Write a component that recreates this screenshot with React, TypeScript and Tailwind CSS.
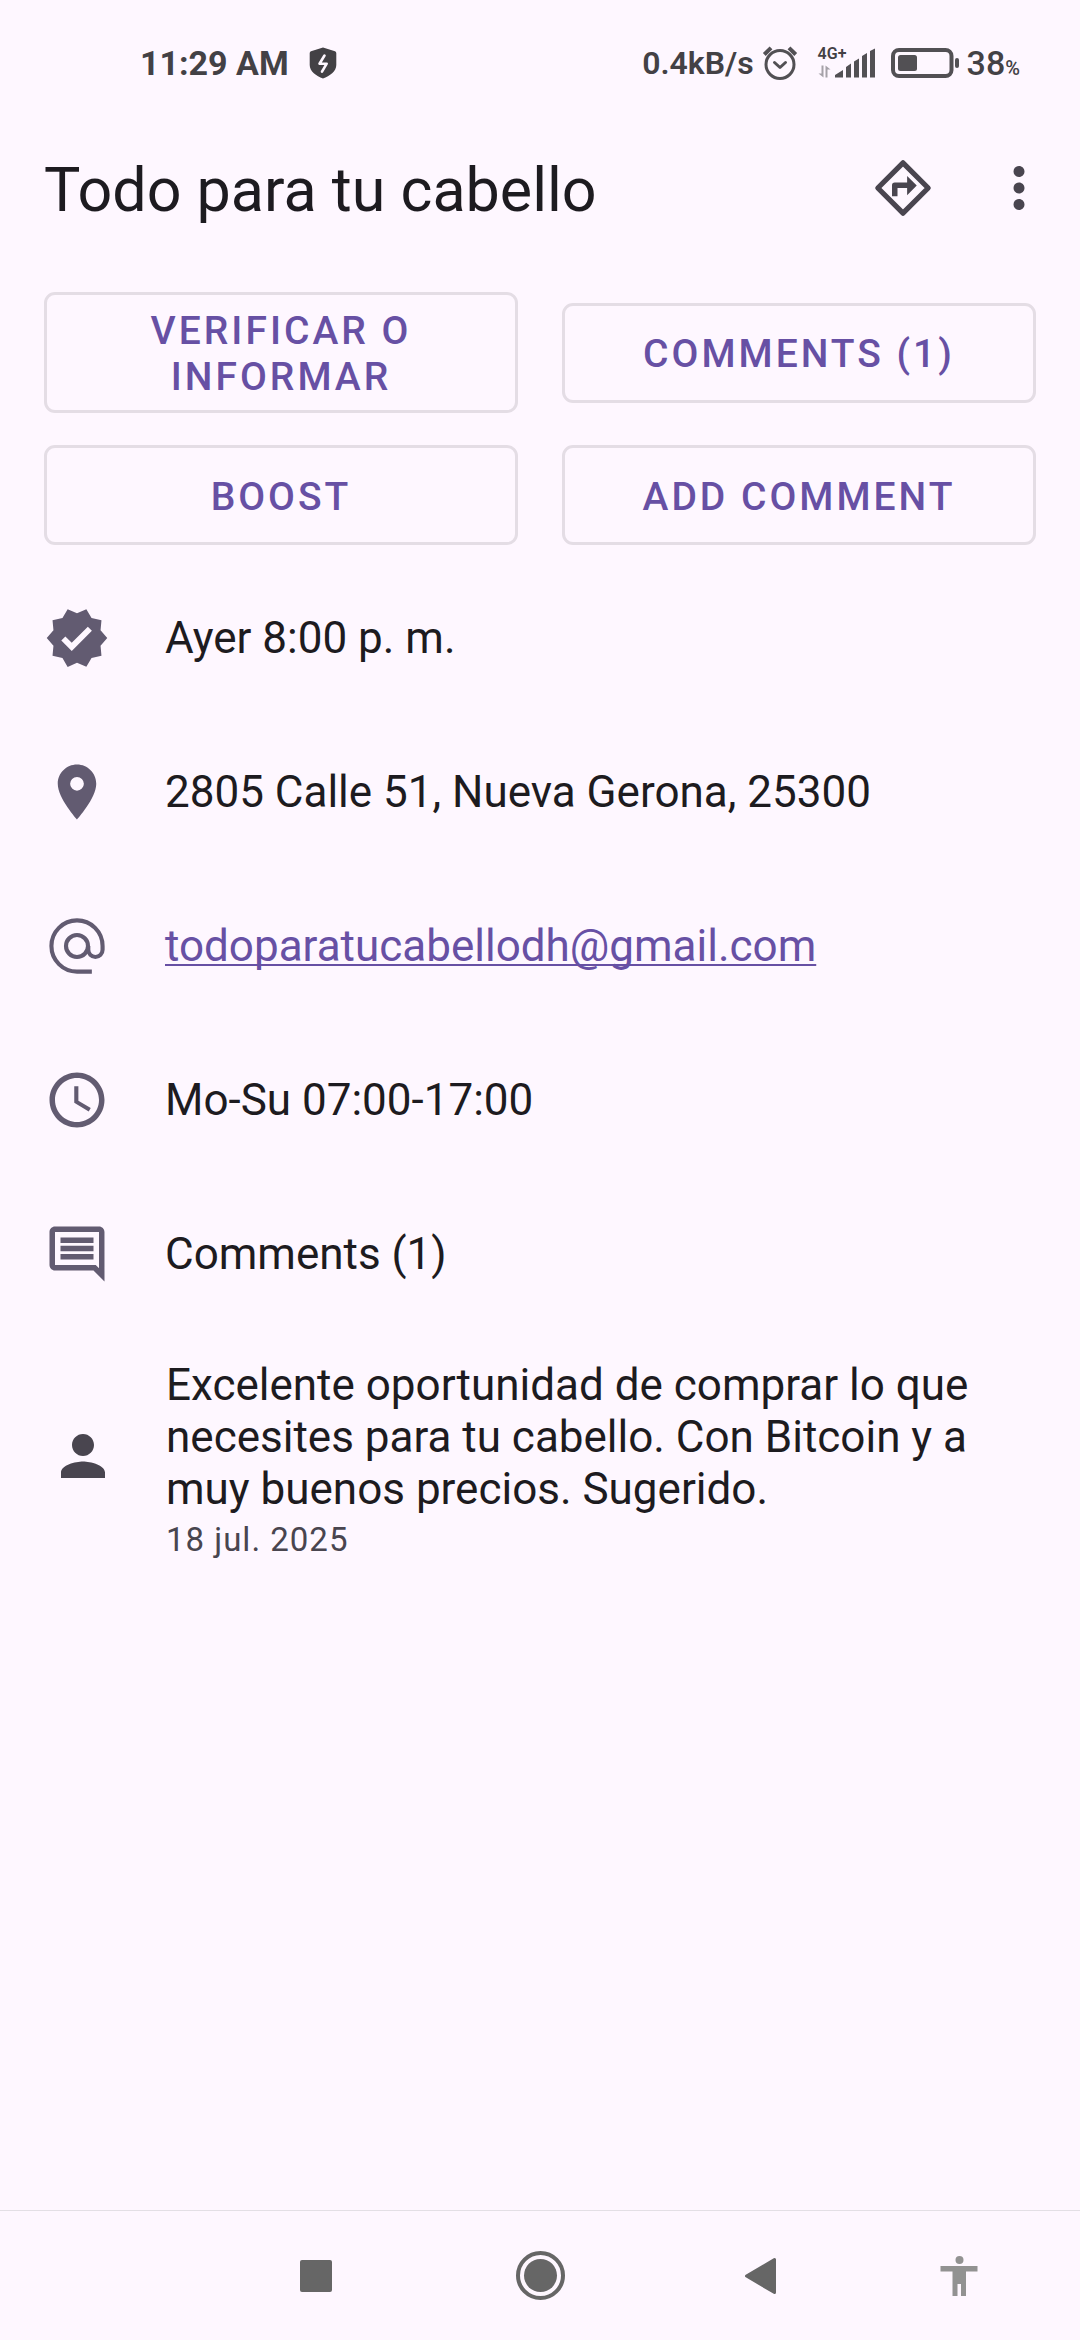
import type { ReactNode } from 'react';
import { MdAccessTime, MdLocationOn, MdMoreVert, MdOutlineComment, MdPerson, MdVerified } from 'react-icons/md';

const actions = ['Verificar o informar', 'Comments (1)', 'Boost', 'Add comment'];

function ShieldIcon() {
  return (
    <svg viewBox="0 0 28 32" className="h-8 w-7" aria-hidden="true">
      <path d="M14 .5 26 4.300a2 2 0 0 1 1.300 1.900V18c0 6.600-6.600 10.900-13.300 13.500C7.300 28.900.7 24.600.7 18V6.200A2 2 0 0 1 2 4.300z" fill="#434145" />
      <path d="m15.500 8.500-5 8.200h7.200l-4.700 8" fill="none" stroke="#fef7ff" strokeWidth="2.600" strokeLinejoin="round" strokeLinecap="round" />
    </svg>
  );
}

function AlarmIcon() {
  return (
    <svg viewBox="0 0 36 36" className="size-9" fill="none" stroke="#525054" strokeWidth="3" strokeLinecap="round" strokeLinejoin="round" aria-hidden="true">
      <circle cx="18" cy="19.500" r="14" />
      <path d="m12.500 17.500 5.500 5 5.500-5" />
      <path d="M2.300 9.500 9 2.800M33.700 9.500 27 2.800" strokeWidth="4" strokeLinecap="butt" />
    </svg>
  );
}

function TrafficIcon() {
  return (
    <svg viewBox="0 0 13 13" className="size-[13px]" fill="#a5a1a8" aria-hidden="true">
      <path d="M3.500.5h2v12L.5 8.500h3zM9.500 12.500h-2V.5l5 4h-3z" />
    </svg>
  );
}

function SignalIcon() {
  return (
    <svg viewBox="0 0 40 30" className="h-[30px] w-10" fill="#525054" aria-hidden="true">
      <path d="M0 29.500v-2.500l8-5v7.500zM11 29.500V19l5-3.500v14zM19 29.500V13.500l5-3v19zM27 29.500V8l5-3v24.500zM35 29.500V3l5-2.500v29z" />
    </svg>
  );
}

function BatteryIcon() {
  return (
    <svg viewBox="0 0 68 30" className="h-[30px] w-[68px]" aria-hidden="true">
      <rect x="2" y="2" width="58.500" height="26" rx="6" fill="none" stroke="#525054" strokeWidth="4" />
      <rect x="7" y="7" width="19" height="16" rx="2.500" fill="#525054" />
      <rect x="64" y="10" width="4" height="10" rx="2" fill="#525054" />
    </svg>
  );
}

function DirectionsIcon() {
  return (
    <svg viewBox="0 0 24 24" className="size-[66px]" fill="currentColor" aria-hidden="true">
      <path d="M12 2.850 21.150 12 12 21.150 2.850 12z" fill="none" stroke="currentColor" strokeWidth="1.900" strokeLinejoin="round" />
      <path d="M8 15v-4a1 1 0 0 1 1-1h4.500V7.600l3.500 3.500-3.500 3.500V12H10v3z" />
    </svg>
  );
}

function AtIcon() {
  return (
    <svg viewBox="0 0 24 24" className="size-full" fill="none" stroke="currentColor" strokeWidth="1.500" aria-hidden="true">
      <circle cx="12" cy="12" r="4" />
      <path d="M17.400 21.300H12A9.300 9.300 0 1 1 21.300 12v1.400a2.600 2.600 0 0 1-5.200 0V12" />
    </svg>
  );
}

function StatusBar() {
  return (
    <div className="flex h-[126px] items-center justify-between pr-[60px] pl-[140px] text-[#434145]">
      <div className="flex items-center gap-5">
        <span className="text-[34px] font-bold">11:29 AM</span>
        <ShieldIcon />
      </div>
      <div className="flex items-center">
        <span className="mr-2 text-[32px] font-semibold">0.4kB/s</span>
        <AlarmIcon />
        <div className="ml-5 flex items-end">
          <div className="flex flex-col gap-[5px]">
            <span className="h-3 w-[17px] text-[16px] leading-3 font-semibold whitespace-nowrap">4G+</span>
            <TrafficIcon />
          </div>
          <SignalIcon />
        </div>
        <div className="mr-2 ml-4">
          <BatteryIcon />
        </div>
        <div className="flex items-baseline">
          <span className="text-[34px] font-medium">38</span>
          <span className="text-[20px] font-medium">%</span>
        </div>
      </div>
    </div>
  );
}

function InfoRow({ icon, children }: { icon: ReactNode; children: ReactNode }) {
  return (
    <li className="flex h-[154px] items-center gap-[55px]">
      <span className="size-[66px] shrink-0 text-[#625b71]">{icon}</span>
      <span>{children}</span>
    </li>
  );
}

function NavigationBar() {
  return (
    <nav
      aria-label="System"
      className="grid h-[130px] grid-cols-[204fr_224fr_224fr_224fr_166fr_38fr] border-t border-[#e3dfe5] text-[#666666]"
    >
      <button type="button" aria-label="Recents" className="col-start-2 flex items-center justify-center">
        <span className="size-8 rounded-xs bg-current" />
      </button>
      <button type="button" aria-label="Home" className="flex items-center justify-center">
        <span className="flex size-[49px] items-center justify-center rounded-full border-4 border-current">
          <span className="size-[33px] rounded-full bg-current" />
        </span>
      </button>
      <button type="button" aria-label="Back" className="flex items-center justify-center">
        <svg viewBox="0 0 40 38" className="h-[38px] w-10" fill="currentColor" stroke="currentColor" strokeWidth="3" strokeLinejoin="round" aria-hidden="true">
          <path d="M2.500 19 30.500 2.500v33z" />
        </svg>
      </button>
      <button type="button" aria-label="Accessibility" className="flex items-center justify-center text-[#929292]">
        <svg viewBox="0 0 38 42" className="h-[42px] w-[38px]" fill="currentColor" aria-hidden="true">
          <circle cx="19.500" cy="5" r="4" />
          <path d="M.5 11h37v5.500H26V41h-5V29h-3.500v12h-5V16.500H.5z" />
        </svg>
      </button>
    </nav>
  );
}

export default function App() {
  return (
    <div className="flex min-h-screen flex-col bg-[#fef7ff] font-[Roboto,sans-serif] text-[#1d1b20]">
      <StatusBar />

      <header className="flex h-[124px] items-center justify-between pr-7 pl-11">
        <h1 className="pt-1 text-[61px] leading-[72px]">Todo para tu cabello</h1>
        <div className="flex items-center gap-[50px] text-[#49454f]">
          <button type="button" aria-label="Directions">
            <DirectionsIcon />
          </button>
          <button type="button" aria-label="More options">
            <MdMoreVert className="size-[66px]" />
          </button>
        </div>
      </header>

      <main className="flex-1 px-11 pt-[42px]">
        <div className="grid grid-cols-2 items-center gap-x-11 gap-y-8">
          {actions.map((label) => (
            <button
              key={label}
              type="button"
              className="min-h-[100px] rounded-[11px] border-3 border-[#e4dde5] px-[66px] pt-[13px] pb-[10px] text-[39px] leading-[46px] font-medium tracking-[3px] text-[#6750a4] uppercase"
            >
              {label}
            </button>
          ))}
        </div>

        <ul className="mt-4 text-[44px] leading-[52px]">
          <InfoRow icon={<MdVerified className="size-full" />}>Ayer 8:00 p. m.</InfoRow>
          <InfoRow icon={<MdLocationOn className="size-full" />}>2805 Calle 51, Nueva Gerona, 25300</InfoRow>
          <InfoRow icon={<AtIcon />}>
            <a
              href="mailto:todoparatucabellodh@gmail.com"
              className="text-[#6750a4] underline decoration-2 underline-offset-[3px] [text-decoration-skip-ink:none]"
            >
              todoparatucabellodh@gmail.com
            </a>
          </InfoRow>
          <InfoRow icon={<MdAccessTime className="size-full" />}>Mo-Su 07:00-17:00</InfoRow>
          <InfoRow icon={<MdOutlineComment className="size-full" />}>Comments (1)</InfoRow>
        </ul>

        <article className="flex items-center gap-[50px] py-7 pl-1.5">
          <MdPerson className="mb-2 size-[66px] shrink-0 text-[#49454f]" />
          <div>
            <p className="text-[44px] leading-[52px]">
              Excelente oportunidad de comprar lo que necesites para tu cabello. Con Bitcoin y a muy buenos precios. Sugerido.
            </p>
            <p className="mt-1 text-[33px] leading-[42px] tracking-[1px] text-[#49454f]">
              <time dateTime="2025-07-18">18 jul. 2025</time>
            </p>
          </div>
        </article>
      </main>

      <NavigationBar />
    </div>
  );
}
